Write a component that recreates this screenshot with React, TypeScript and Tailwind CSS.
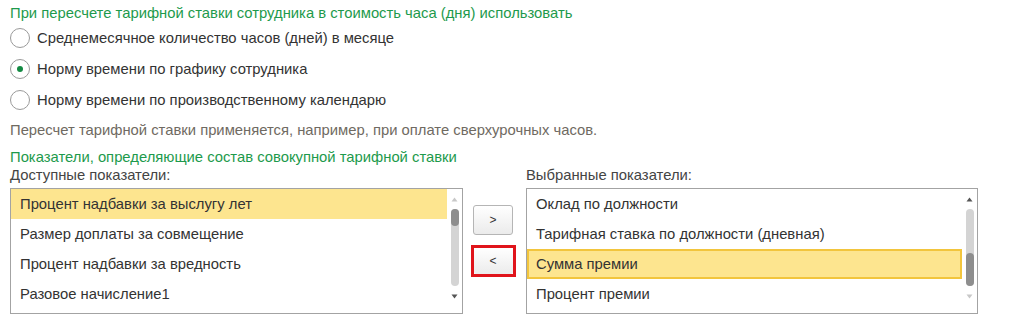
import type { ReactNode } from 'react';

const available = [
    'Процент надбавки за выслугу лет',
    'Размер доплаты за совмещение',
    'Процент надбавки за вредность',
    'Разовое начисление1',
];

const selected = ['Оклад по должности', 'Тарифная ставка по должности (дневная)', 'Сумма премии', 'Процент премии'];

function Radio({ checked, children }: { checked?: boolean; children: ReactNode }) {
    return (
        <div className="flex h-[31px] items-center gap-[7px]">
            <span className="flex h-[20px] w-[20px] items-center justify-center rounded-full border border-[#9a9a9a] bg-white">
                {checked && <span className="h-[6px] w-[6px] rounded-full bg-[#138a43]" />}
            </span>
            <span className="text-[#333]">{children}</span>
        </div>
    );
}

function Scrollbar({ thumbTop }: { thumbTop: boolean }) {
    return (
        <div className="flex w-[12px] flex-col items-center pt-[8px]">
            <svg width="7" height="5" viewBox="0 0 7 5">
                <path d="M3.5 0.5 L6.5 4.5 L0.5 4.5 Z" fill={thumbTop ? '#c8c8c8' : '#555'} />
            </svg>
            <div className="mt-[7px] flex h-[77px] w-[8px] flex-col rounded-full bg-[#d4d4d4]">
                {thumbTop ? (
                    <div className="h-[17px] rounded-full bg-[#8e8e8e]" />
                ) : (
                    <div className="mt-auto h-[33px] rounded-full bg-[#8e8e8e]" />
                )}
            </div>
            <svg className="mt-[8px]" width="7" height="5" viewBox="0 0 7 5">
                <path d="M0.5 0.5 L6.5 0.5 L3.5 4.5 Z" fill={thumbTop ? '#555' : '#c8c8c8'} />
            </svg>
        </div>
    );
}

function ListBox({ items, active, framed, thumbTop }: { items: string[]; active: number; framed?: boolean; thumbTop: boolean }) {
    return (
        <div className="flex h-[126px] border border-[#a3a3a3] bg-white">
            <div className="flex flex-1 flex-col">
                {items.map((t, i) => (
                    <div
                        key={t}
                        className={
                            i === active
                                ? framed
                                    ? 'flex h-[30px] items-center border-2 border-[#f2c53d] bg-[#fde58f] pl-[7px] text-[#333]'
                                    : 'flex h-[30px] items-center bg-[#fde58f] pl-[9px] text-[#333]'
                                : 'flex h-[30px] items-center pl-[9px] text-[#333]'
                        }
                    >
                        {t}
                    </div>
                ))}
            </div>
            <div className="flex w-[15px] justify-center">
                <Scrollbar thumbTop={thumbTop} />
            </div>
        </div>
    );
}

export default function App() {
    return (
        <div
            className="h-[326px] w-[1019px] bg-white pl-[10px] pt-[4px] text-[14.8px] leading-[18px]"
            style={{ fontFamily: "'Liberation Sans', Arial, sans-serif" }}
        >
            <div className="text-[#1d9a4c]">При пересчете тарифной ставки сотрудника в стоимость часа (дня) использовать</div>
            <div className="flex flex-col">
                <Radio>Среднемесячное количество часов (дней) в месяце</Radio>
                <Radio checked>Норму времени по графику сотрудника</Radio>
                <Radio>Норму времени по производственному календарю</Radio>
            </div>
            <div className="mt-[6px] text-[#6f6a62]">Пересчет тарифной ставки применяется, например, при оплате сверхурочных часов.</div>
            <div className="mt-[9px] text-[#1d9a4c]">Показатели, определяющие состав совокупной тарифной ставки</div>
            <div className="grid grid-cols-[453px_63px_452px]">
                <div className="text-[#444]">Доступные показатели:</div>
                <div />
                <div className="text-[#444]">Выбранные показатели:</div>
            </div>
            <div className="mt-[4px] grid grid-cols-[453px_63px_452px]">
                <ListBox items={available} active={0} thumbTop />
                <div className="flex flex-col items-center pt-[17px]">
                    <button className="ml-[-3px] flex h-[30px] w-[40px] items-center justify-center rounded-[3px] border border-[#b5b5b5] bg-linear-to-b from-white to-[#ebebeb] text-[12px] text-[#333]">
                        &gt;
                    </button>
                    <div className="ml-[-3px] mt-[10px] border-[3px] border-[#e0141b] p-0">
                        <button className="flex h-[26px] w-[39px] items-center justify-center rounded-[2px] bg-linear-to-b from-white to-[#ebebeb] text-[12px] text-[#333]">
                            &lt;
                        </button>
                    </div>
                </div>
                <ListBox items={selected} active={2} framed thumbTop={false} />
            </div>
        </div>
    );
}
